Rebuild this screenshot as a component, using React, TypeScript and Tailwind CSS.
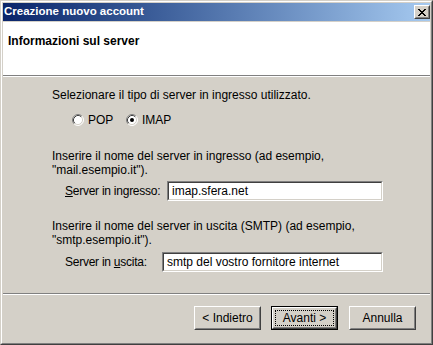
import React from 'react';

const font = "font-['Liberation_Sans',Arial,sans-serif]";

const Radio = ({ checked = false }: { checked?: boolean }) => (
    <svg width="12" height="12" viewBox="0 0 12 12" className="shrink-0">
        <circle cx="6" cy="6" r="5" fill="#ffffff" />
        <path d="M2.11 9.89 A5.5 5.5 0 0 1 9.89 2.11" fill="none" stroke="#808080" strokeWidth="1" />
        <path d="M9.89 2.11 A5.5 5.5 0 0 1 2.11 9.89" fill="none" stroke="#ffffff" strokeWidth="1" />
        <path d="M2.82 9.18 A4.5 4.5 0 0 1 9.18 2.82" fill="none" stroke="#404040" strokeWidth="1" />
        <path d="M9.18 2.82 A4.5 4.5 0 0 1 2.82 9.18" fill="none" stroke="#d4d0c8" strokeWidth="1" />
        {checked && <circle cx="6" cy="6" r="2" fill="#000000" />}
    </svg>
);

const CloseGlyph = () => (
    <svg width="8" height="7" viewBox="0 0 8 7" shapeRendering="crispEdges">
        {[[0, 0], [1, 0], [6, 0], [7, 0], [1, 1], [2, 1], [5, 1], [6, 1], [2, 2], [3, 2], [4, 2], [5, 2], [3, 3], [4, 3], [2, 4], [3, 4], [4, 4], [5, 4], [1, 5], [2, 5], [5, 5], [6, 5], [0, 6], [1, 6], [6, 6], [7, 6]].map(([x, y], i) => (
            <rect key={i} x={x} y={y} width="1" height="1" fill="#000" />
        ))}
    </svg>
);

const Button = ({ label, isDefault = false }: { label: string; isDefault?: boolean }) => (
    <div className={`w-[67px] h-[24px] shrink-0 text-[12px] text-black ${isDefault ? 'border border-black' : ''}`}>
        <div className="w-full h-full border border-t-white border-l-white border-r-[#404040] border-b-[#404040]">
            <div className={`w-full h-full border border-t-[#d4d0c8] border-l-[#d4d0c8] border-r-[#808080] border-b-[#808080] ${isDefault ? 'p-[1px]' : 'flex items-center justify-center'}`}>
                {isDefault ? (
                    <div className="w-full h-full border border-dotted border-black flex items-center justify-center">{label}</div>
                ) : label}
            </div>
        </div>
    </div>
);

const SunkenInput = ({ value, width }: { value: string; width: string }) => (
    <div className={`${width} h-[20px] shrink-0 border border-t-[#808080] border-l-[#808080] border-r-white border-b-white`}>
        <div className="w-full h-full border border-t-[#404040] border-l-[#404040] border-r-[#d4d0c8] border-b-[#d4d0c8] bg-white flex items-center pl-[3px] text-[12px] text-black leading-none whitespace-nowrap">
            {value}
        </div>
    </div>
);

export default function App() {
    return (
        <div className={`w-[433px] h-[345px] bg-[#d4d0c8] ${font} border border-t-[#d4d0c8] border-l-[#d4d0c8] border-r-[#404040] border-b-[#404040]`}>
            <div className="w-full h-full border border-t-white border-l-white border-r-[#808080] border-b-[#808080] p-[1px] flex flex-col">
                {/* caption */}
                <div className="h-[18px] shrink-0 bg-gradient-to-r from-[#0a246a] to-[#a6caf0] flex items-center justify-between pl-[1px] pr-0">
                    <span className="text-white font-bold text-[11.5px] leading-none">Creazione nuovo account</span>
                    <div className="w-[16px] h-[14px] border border-t-white border-l-white border-r-[#404040] border-b-[#404040] bg-[#d4d0c8]">
                        <div className="w-full h-full border border-t-[#d4d0c8] border-l-[#d4d0c8] border-r-[#808080] border-b-[#808080] flex items-center justify-center">
                            <CloseGlyph />
                        </div>
                    </div>
                </div>

                {/* header */}
                <div className="mt-[1px] h-[53px] shrink-0 bg-white pl-[5px] pt-[12px]">
                    <div className="font-bold text-[12px] leading-[14px] text-black">Informazioni sul server</div>
                </div>
                <div className="h-[1px] bg-[#808080] shrink-0" />
                <div className="h-[1px] bg-white shrink-0" />

                {/* body */}
                <div className="flex flex-col pl-[49px] text-[12px] leading-[14px] text-black">
                    <div className="mt-[11px]">Selezionare il tipo di server in ingresso utilizzato.</div>
                    <div className="mt-[12px] ml-[20px] h-[12px] flex items-center">
                        <div className="w-[54px] flex items-center gap-[4px]">
                            <Radio />
                            <span>POP</span>
                        </div>
                        <div className="flex items-center gap-[4px]">
                            <Radio checked />
                            <span>IMAP</span>
                        </div>
                    </div>

                    <div className="mt-[23px]">
                        Inserire il nome del server in ingresso (ad esempio,<br />"mail.esempio.it").
                    </div>
                    <div className="mt-[4px] flex items-center">
                        <span className="w-[115px] shrink-0 pl-[13px] whitespace-nowrap tracking-[-0.25px]"><u>S</u>erver in ingresso:</span>
                        <SunkenInput value="imap.sfera.net" width="w-[216px]" />
                    </div>

                    <div className="mt-[18px]">
                        Inserire il nome del server in uscita (SMTP) (ad esempio,<br />"smtp.esempio.it").
                    </div>
                    <div className="mt-[5px] flex items-center">
                        <span className="w-[110px] shrink-0 pl-[13px] whitespace-nowrap tracking-[-0.25px]">Server in <u>u</u>scita:</span>
                        <SunkenInput value="smtp del vostro fornitore internet" width="w-[221px]" />
                    </div>
                </div>

                {/* footer */}
                <div className="mt-auto shrink-0">
                    <div className="h-[1px] bg-[#808080]" />
                    <div className="h-[1px] bg-white" />
                    <div className="flex justify-end gap-[10px] pr-[14px] pt-[11px] pb-[12px]">
                        <Button label="< Indietro" />
                        <Button label="Avanti >" isDefault />
                        <div className="ml-[1px]">
                            <Button label="Annulla" />
                        </div>
                    </div>
                </div>
            </div>
        </div>
    );
}
